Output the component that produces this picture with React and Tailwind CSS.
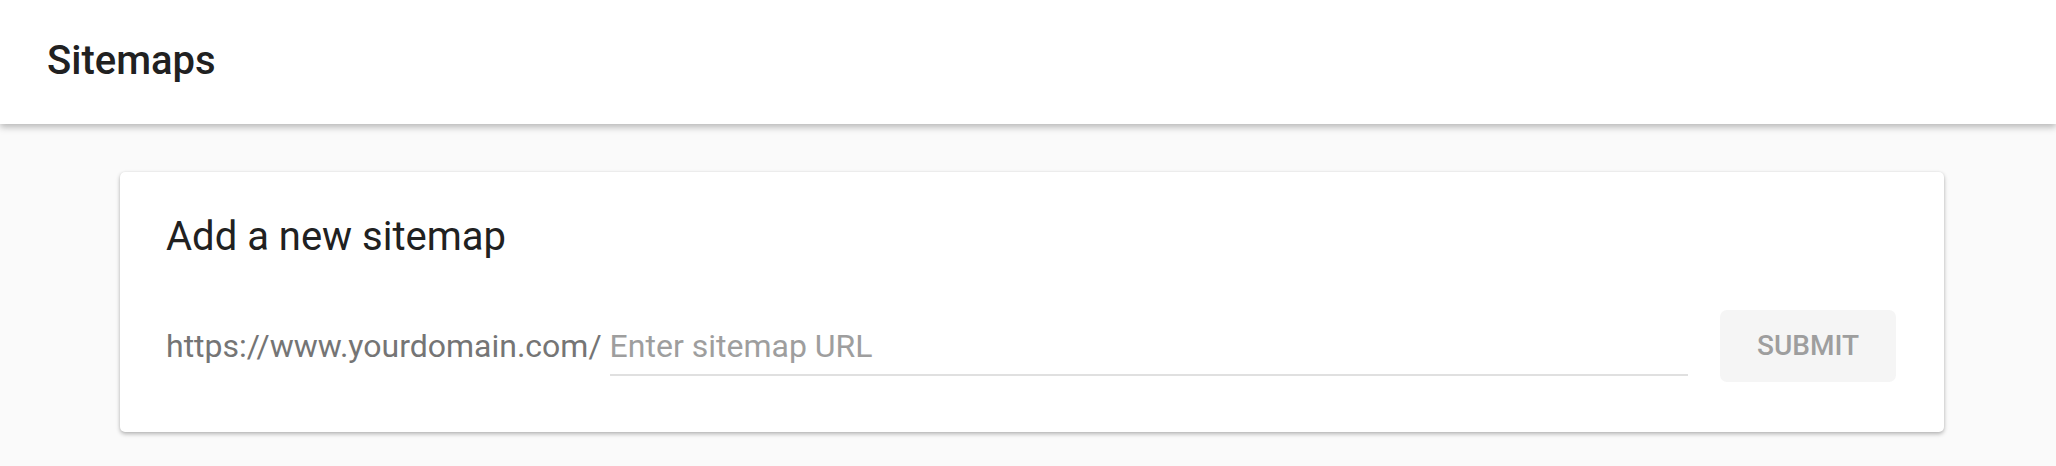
import React, { useState } from "react";

const App = () => {
  const [url, setUrl] = useState("");

  return (
    <div className="min-h-[466px] w-full bg-[#fafafa] font-['Roboto',sans-serif]">
      <header className="relative z-10 flex h-[124px] items-center bg-white pb-[3px] pl-[47px] shadow-[0_3px_7px_rgba(0,0,0,0.28)]">
        <h1 className="text-[40px] leading-[48px] font-medium text-[#212121]">Sitemaps</h1>
      </header>

      <main className="pt-[48px] pl-[120px] pr-[112px]">
        <section className="rounded-[5px] bg-white pt-[41px] pb-[50px] pl-[46px] pr-[48px] shadow-[0_2px_4px_rgba(0,0,0,0.28),0_0_2px_rgba(0,0,0,0.08)]">
          <h2 className="text-[40px] leading-[48px] font-normal text-[#212121]">Add a new sitemap</h2>

          <div className="mt-[49px] flex items-center">
            <span className="text-[32px] leading-[38px] text-[#757575]">https://www.yourdomain.com/</span>
            <div className="ml-2 h-[60px] flex-1 border-b-2 border-[#e0e0e0] pt-[11px]">
              <input
                type="text"
                value={url}
                onChange={(e) => setUrl(e.target.value)}
                placeholder="Enter sitemap URL"
                className="h-[38px] w-full bg-transparent text-[32px] leading-[38px] text-[#212121] outline-none placeholder:text-[#9e9e9e]"
              />
            </div>
            <button
              type="button"
              disabled={!url}
              className="ml-[32px] h-[72px] w-[176px] rounded-[7px] bg-[#f5f5f5] text-[28px] font-medium text-[#9e9e9e]"
            >
              SUBMIT
            </button>
          </div>
        </section>
      </main>
    </div>
  );
};

export default App;
